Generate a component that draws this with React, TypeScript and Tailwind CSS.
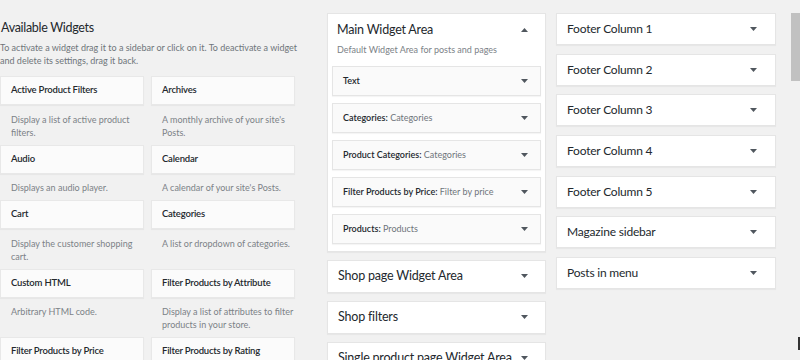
import React from "react";

const font = { fontFamily: 'Lato, "Noto Sans", sans-serif' };

function Arrow({ up = false }: { up?: boolean }) {
  return (
    <svg width="7" height="4" viewBox="0 0 7 4" className="shrink-0">
      {up ? (
        <path d="M0 4h7L3.5 0z" fill="#50575e" />
      ) : (
        <path d="M0 0h7L3.5 4z" fill="#50575e" />
      )}
    </svg>
  );
}

type W = { title: string; desc: string[] };

const rows: [W, W][] = [
  [
    { title: "Active Product Filters", desc: ["Display a list of active product", "filters."] },
    { title: "Archives", desc: ["A monthly archive of your site's", "Posts."] },
  ],
  [
    { title: "Audio", desc: ["Displays an audio player."] },
    { title: "Calendar", desc: ["A calendar of your site's Posts."] },
  ],
  [
    { title: "Cart", desc: ["Display the customer shopping", "cart."] },
    { title: "Categories", desc: ["A list or dropdown of categories."] },
  ],
  [
    { title: "Custom HTML", desc: ["Arbitrary HTML code."] },
    { title: "Filter Products by Attribute", desc: ["Display a list of attributes to filter", "products in your store."] },
  ],
  [
    { title: "Filter Products by Price", desc: ["Display a list of price filter"] },
    { title: "Filter Products by Rating", desc: ["Display a list of star ratings"] },
  ],
];

function WidgetCell({ w }: { w: W }) {
  return (
    <div className="flex flex-col">
      <div className="h-[29px] bg-[#fbfbfb] border border-[#e8e8e8] shadow-[0_1px_1px_rgba(0,0,0,0.04)] flex items-center pl-[10px] text-[9.5px] tracking-[-0.2px] font-semibold text-[#23282d] whitespace-nowrap">
        {w.title}
      </div>
      <div className="pt-[7.5px] pb-[6px] pl-[11px] text-[9px] leading-[13px] text-[#7c8287] whitespace-nowrap">
        {w.desc.map((d, i) => (
          <div key={i}>{d}</div>
        ))}
      </div>
    </div>
  );
}

const inner: [string, string][] = [
  ["Text", ""],
  ["Categories:", "Categories"],
  ["Product Categories:", "Categories"],
  ["Filter Products by Price:", "Filter by price"],
  ["Products:", "Products"],
];

function Panel({ title }: { title: string }) {
  return (
    <div className="h-[33px] bg-white border border-[#e5e5e5] shadow-[0_1px_1px_rgba(0,0,0,0.04)] flex items-center justify-between pl-[10px] pr-[17px] text-[12.5px] tracking-[-0.2px] text-[#23282d]">
      <span className="whitespace-nowrap">{title}</span>
      <Arrow />
    </div>
  );
}

export default function App() {
  return (
    <div className="w-[800px] h-[360px] bg-[#f1f1f1] overflow-hidden relative" style={font}>
      <div className="flex items-start">
        {/* Left column */}
        <div className="w-[295px] shrink-0">
          <div className="pt-[19px] text-[12.5px] tracking-[-0.3px] leading-[18px] text-[#23282d] pl-[1px]">Available Widgets</div>
          <div className="pt-[3.5px] text-[9px] leading-[13px] text-[#6f757a] whitespace-nowrap">
            <div>To activate a widget drag it to a sidebar or click on it. To deactivate a widget</div>
            <div>and delete its settings, drag it back.</div>
          </div>
          <div className="mt-[9.5px] flex flex-col">
            {rows.map((r, i) => (
              <div key={i} className="grid grid-cols-[144px_144px] gap-x-[7px]">
                <WidgetCell w={r[0]} />
                <WidgetCell w={r[1]} />
              </div>
            ))}
          </div>
        </div>

        {/* Middle column */}
        <div className="ml-[32px] w-[219px] shrink-0 pt-[13px] flex flex-col gap-[8px]">
          <div className="bg-white border border-[#e5e5e5] shadow-[0_1px_1px_rgba(0,0,0,0.04)] px-[4px] pb-[7px]">
            <div className="pt-[8px] h-[24px] flex items-center justify-between pl-[5px] pr-[13px]">
              <span className="text-[12.5px] tracking-[-0.2px] text-[#23282d] leading-[16px] whitespace-nowrap">Main Widget Area</span>
              <Arrow up />
            </div>
            <div className="mt-[4.5px] pl-[5px] text-[9px] leading-[13px] text-[#7c8287] whitespace-nowrap">
              Default Widget Area for posts and pages
            </div>
            <div className="mt-[10px] flex flex-col gap-[7px]">
              {inner.map(([a, b], i) => (
                <div
                  key={i}
                  className="h-[30px] bg-[#fafafa] border border-[#e5e5e5] shadow-[0_1px_1px_rgba(0,0,0,0.04)] flex items-center justify-between pl-[10px] pr-[12px] text-[9px] whitespace-nowrap"
                >
                  <span>
                    <span className="font-semibold text-[#23282d]">{a}</span>
                    {b && <span className="text-[#6f757a]"> {b}</span>}
                  </span>
                  <Arrow />
                </div>
              ))}
            </div>
          </div>
          <Panel title="Shop page Widget Area" />
          <Panel title="Shop filters" />
          <Panel title="Single product page Widget Area" />
        </div>

        {/* Right column */}
        <div className="ml-[10px] w-[220px] shrink-0 pt-[13px] flex flex-col gap-[8.7px]">
          {["Footer Column 1", "Footer Column 2", "Footer Column 3", "Footer Column 4", "Footer Column 5", "Magazine sidebar", "Posts in menu"].map(
            (t) => (
              <div
                key={t}
                className="h-[32px] bg-white border border-[#e5e5e5] shadow-[0_1px_1px_rgba(0,0,0,0.04)] flex items-center justify-between pl-[10px] pr-[18px] text-[12px] tracking-[-0.2px] text-[#23282d]"
              >
                <span>{t}</span>
                <Arrow />
              </div>
            )
          )}
        </div>
      </div>

      {/* scrollbar */}
      <div className="absolute left-[791px] top-[13px] w-[9px] h-[68px] bg-[#c1c1c1]" />
      <div className="absolute left-[798px] top-[337px] w-[2px] h-[13px] bg-[#333]" />
    </div>
  );
}
